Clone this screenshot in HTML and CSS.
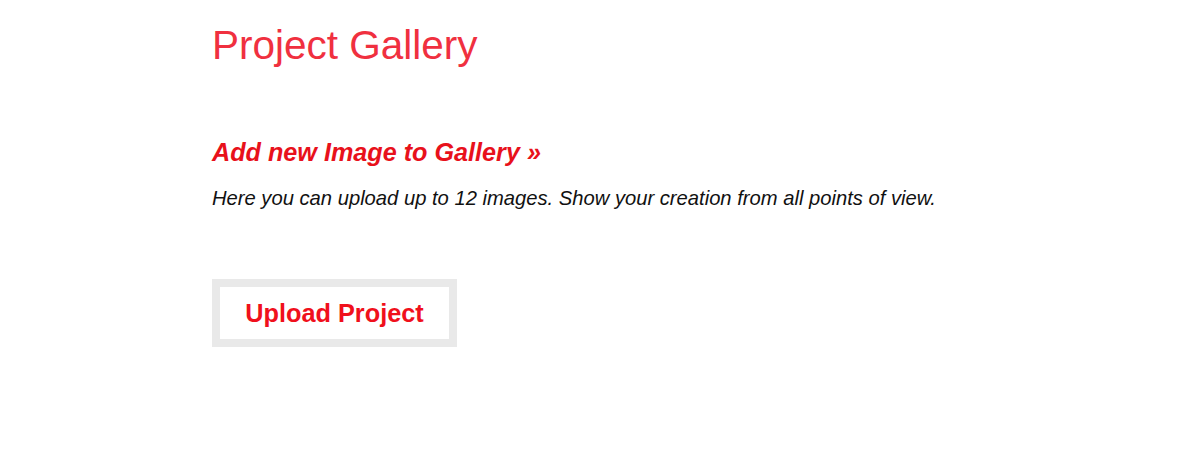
FILE: index.html
```html
<!DOCTYPE html>
<html>
<head>
    <title>Project Gallery</title>
    <link rel="stylesheet" href="styles.css">
</head>
<body>
    <div class="page">
        <h1 class="page-title">Project Gallery</h1>

        <div class="gallery-intro">
            <h2 class="add-link">Add new Image to Gallery &raquo;</h2>
            <p class="hint">Here you can upload up to 12 images. Show your creation from all points of view.</p>
        </div>

        <button type="button" class="upload-btn">Upload Project</button>
    </div>
</body>
</html>
```

FILE: styles.css
```css
body {
    font-family: Arial, "Liberation Sans", sans-serif;
    background-color: #fff;
    margin: 0;
    padding: 0;
}

.page {
    width: 776px;
    margin: 0 auto;
    padding-top: 22px;
}

.page-title {
    font-size: 40.5px;
    font-weight: normal;
    color: #f0303f;
    margin: 0;
    line-height: 46px;
}

.gallery-intro {
    margin-top: 69px;
}

.add-link {
    font-size: 25.2px;
    font-style: italic;
    font-weight: bold;
    color: #e8111b;
    margin: 0;
    line-height: 30px;
}

.hint {
    font-size: 20.2px;
    font-style: italic;
    color: #111;
    margin: 19px 0 0;
    line-height: 24px;
}

.upload-btn {
    margin-top: 69px;
    background-color: #fff;
    border: 8px solid #e9e9e9;
    color: #f0101c;
    font-family: Arial, "Liberation Sans", sans-serif;
    font-size: 25.3px;
    font-weight: bold;
    width: 245px;
    height: 68px;
    padding: 0;
    cursor: pointer;
}
```
